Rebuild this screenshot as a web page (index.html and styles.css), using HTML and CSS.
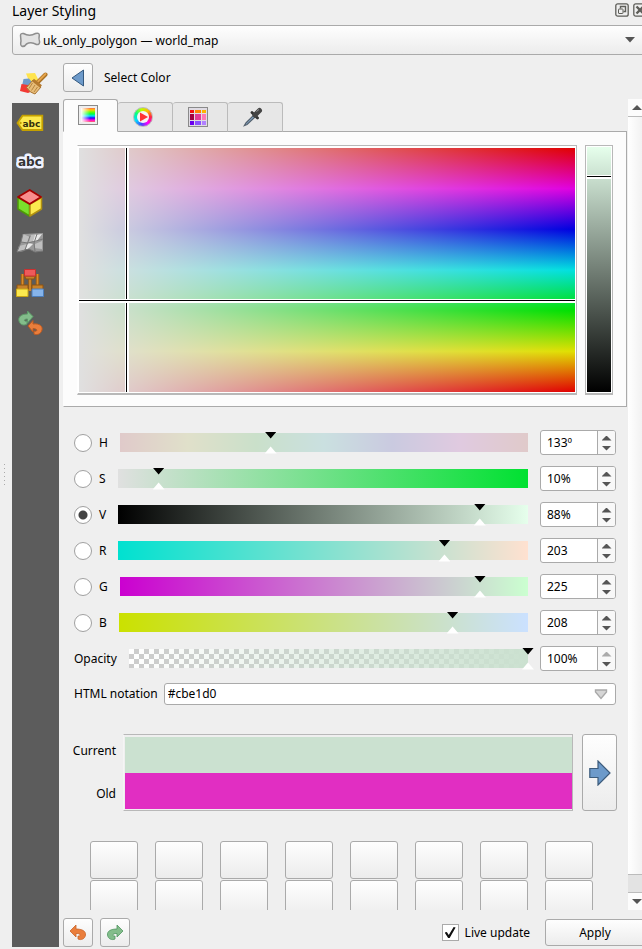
FILE: index.html
```html
<!DOCTYPE html>
<html lang="en">
<head>
<meta charset="utf-8">
<title>Layer Styling</title>
<link rel="stylesheet" href="styles.css">
</head>
<body>
<div class="dock">
  <div class="splitter"><i></i></div>
  <div class="panel">
    <header class="titlebar">
      <h1>Layer Styling</h1>
      <button class="dock-btn" aria-label="Float panel"><svg width="14" height="14" viewBox="0 0 14 14" fill="none" stroke="#5e5e59"><rect x=".8" y=".8" width="12.4" height="12.4" rx="2" stroke-width="1.3"/><path d="M5.5 5.5V3.5h5v5h-2" stroke-width="1.4"/><rect x="3.5" y="6" width="4.5" height="4.5" rx=".5"/></svg></button>
      <button class="dock-btn" aria-label="Close panel"><svg width="14" height="14" viewBox="0 0 14 14" fill="none" stroke="#5e5e59"><rect x=".8" y=".8" width="12.4" height="12.4" rx="2" stroke-width="1.3"/><path d="M3.5 3.5l7 7M10.500 3.500l-7 7" stroke-width="2.4"/></svg></button>
    </header>
    <div class="layer">
      <svg class="layer-icon" width="22" height="16" viewBox="0 0 22 16"><path d="M1.500 3.500Q1.500 1 4.500 1.500C9 4 13 3.500 16.500 1.500Q20 .5 20.300 3Q19.500 6.500 20.600 10Q20.500 13 17.500 12.500Q12 9.500 7.500 12Q5.500 15 3 14.200Q1 13.500 2 9Z" fill="#e3e3e3" stroke="#8e8e8e" stroke-width="1.500"/></svg>
      <select class="layer-select" aria-label="Layer"><option>uk_only_polygon — world_map</option></select>
      <svg class="layer-arrow" width="10" height="6" viewBox="0 0 10 6"><path d="M0 0h10L5 5.500z" fill="#555"/></svg>
    </div>
    <div class="body">
      <nav class="sidebar">
        <button class="side-item active" aria-label="Symbology"><svg width="28" height="28" viewBox="0 0 28 28">
          <path d="M6 4.500L15 4L19 12L9 12Z" fill="#ffe44d"/><path d="M3.500 10L9 9.500L15 17L2 17Z" fill="#6f9bcb"/><path d="M1.500 15L8 16L15 21L8 24L0 22Z" fill="#f23a34"/>
          <path d="M17.500 13.500L25.500 5.500" stroke="#a86f20" stroke-width="4" stroke-linecap="round"/><path d="M17 13.500L25.500 5" stroke="#e5a44c" stroke-width="2" stroke-linecap="round"/>
          <path d="M13 11L21 18L15 25Q10 24 6.500 18.500Z" fill="#e8bd79" stroke="#a87535"/><path d="M13 11L21 17.500" stroke="#b57a2f" stroke-width="3"/><path d="M12.500 14L9 19.500M15 16L11.500 21.500M17.500 18L14 23" stroke="#b6853f"/></svg></button>
        <button class="side-item" aria-label="Labels"><svg width="28" height="28" viewBox="0 0 28 28"><path d="M1.500 14L6.500 6.700H26.300V21H6.500Z" fill="#fce94f" stroke="#c4a000" stroke-width="1.800"/><circle cx="4.500" cy="14" r="1.200" fill="#c4a000"/><text class="tag-text" x="6.500" y="17.500">abc</text></svg></button>
        <button class="side-item" aria-label="Masks"><svg width="28" height="28" viewBox="0 0 28 28"><text class="halo-text" x="2" y="17">abc</text></svg></button>
        <button class="side-item" aria-label="3D view"><svg width="28" height="28" viewBox="0 0 28 28" stroke-linejoin="round"><path d="M2 8.500L13.500 15V27L2 20Z" fill="#7be02c" stroke="#4e9a06" stroke-width="1.500"/><path d="M25.500 8.500L14 15V27L25.500 20Z" fill="#fce94f" stroke="#b09010" stroke-width="1.500"/><path d="M13.700 1L25 8L13.700 15L2 8Z" fill="#f98d8d" stroke="#a40000" stroke-width="1.800"/></svg></button>
        <button class="side-item" aria-label="Diagrams"><svg width="28" height="28" viewBox="0 0 28 28"><path d="M7 5L27 4V22L19 23L13 20L1 23L5 13Z" fill="#999"/><path d="M7 5L14 8L12 14L5 13ZM15 6L21 5L19 12L13 13ZM3 17L11 15L8 22L1 23ZM19 15L26 12V20L18 19Z" fill="#bfbfbf"/><path d="M19 6L26 5L21 12L17 13ZM12 14L17 15L12 20L9 20Z" fill="#e8e8e8"/><path d="M7 5L5 13L1 23L13 20L19 23L27 22M5 13L12 14L20 12L27 10M14 7L9 21M21 5L18 14L19 22" fill="none" stroke="#777"/></svg></button>
        <button class="side-item" aria-label="Rendering"><svg width="28" height="30" viewBox="0 0 28 30"><path d="M6.500 18V6M21.500 18V6M14 10V23" fill="none" stroke="#9c5c12" stroke-width="3.500"/><path d="M6.500 18V6M21.500 18V6M14 10V23" fill="none" stroke="#d98d2d" stroke-width="1.600"/><path d="M1 17H12V22H1ZM16 17H27V22H16ZM8.500 8H19.500L18 11H10Z" fill="#c6822c" stroke="#8d5310"/><path d="M8.500 1.500H19.500V8H8.500Z" fill="#ee5a5a" stroke="#c93030"/><path d="M.5 21H12V28.500H.5Z" fill="#fce94f" stroke="#c9a514"/><path d="M16 21H27.500V28.500H16Z" fill="#86b4ea" stroke="#4c7ebc"/></svg></button>
        <button class="side-item" aria-label="History"><svg width="28" height="28" viewBox="0 0 28 28"><path d="M17 7.500L11.500 2V5C5 5 2 8 3 12C4 16 8 17 11 15V12C8 13 7 10 11.500 10V14Z" fill="#83bd8b" stroke="#5d9b68"/><path d="M12 17L17 11.500V15C24 14 27 18 26 21C25 25 21 26.500 18 25V22C21 23 23 20 17 19.500V23Z" fill="#ea7e3c" stroke="#bd5a20"/></svg></button>
      </nav>
      <main class="main">
        <div class="heading"><button class="btn square" aria-label="Back"><svg width="14" height="18" viewBox="0 0 14 18"><path d="M12.500 1V17L1 9Z" fill="#6d9aca" stroke="#34597f"/></svg></button><h2>Select Color</h2></div>
        <div class="scroll-area">
          <div class="content">
            <div class="tabs" role="tablist">
              <button class="tab selected" role="tab" aria-selected="true" aria-label="Color ramp"><span class="ramp-icon"></span></button>
              <button class="tab" role="tab" aria-label="Color wheel"><span class="wheel-icon"><svg width="20" height="20" viewBox="0 0 20 20"><circle cx="10" cy="10" r="6" fill="#f5f5f5"/><path d="M7 5.500L15 10L7 14.500Z" fill="#f33"/></svg></span></button>
              <button class="tab" role="tab" aria-label="Color swatches"><svg width="20" height="20" viewBox="0 0 20 20"><rect x=".5" y=".5" width="19" height="19" fill="#e0dce4" stroke="#8a8a8a"/><path d="M2 3h4v3H2z" fill="#f01010"/><path d="M7 3h6v3H7z" fill="#ff8200"/><path d="M14 3h4v3h-4z" fill="#ffb400"/><path d="M2 7h4v6H2z" fill="#a00040"/><path d="M7 7h6v6H7z" fill="#e23a93"/><path d="M14 7h4v6h-4z" fill="#ff78b4"/><path d="M2 14h4v4H2z" fill="#6a00ee"/><path d="M7 14h6v4H7z" fill="#8a50ff"/><path d="M14 14h4v4h-4z" fill="#b080ff"/></svg></button>
              <button class="tab" role="tab" aria-label="Color picker"><svg width="20" height="20" viewBox="0 0 20 20"><path d="M11 8L3 16L1.500 18.500L4 17.500L12.500 9.500" fill="#9cc7ee" stroke="#54616e" stroke-width="1.300"/><path d="M9 5.500L14.500 11" stroke="#333" stroke-width="2.800" stroke-linecap="round"/><path d="M12 8L16.500 3.500" stroke="#444" stroke-width="5" stroke-linecap="round"/><path d="M13.500 4.500L16 2.500" stroke="#999"/></svg></button>
            </div>
            <section class="picker">
              <div class="frame field-frame"><div class="field"><i class="cross-x"></i><i class="cross-y"></i></div></div>
              <div class="frame value-frame"><div class="value-ramp"><i class="value-mark"></i></div></div>
            </section>
            <section class="channels">
              <div class="channel"><input class="radio" type="radio" name="ch" id="ch-h"><label for="ch-h">H</label><input class="slider hue" type="range" aria-label="Hue" max="360" value="133"><span class="spin"><input aria-label="Hue value" value="133º"><button class="up" aria-label="Increase"></button><button class="down" aria-label="Decrease"></button></span></div>
              <div class="channel"><input class="radio" type="radio" name="ch" id="ch-s"><label for="ch-s">S</label><input class="slider sat" type="range" aria-label="Saturation" value="10"><span class="spin"><input aria-label="Saturation value" value="10%"><button class="up" aria-label="Increase"></button><button class="down" aria-label="Decrease"></button></span></div>
              <div class="channel"><input class="radio" type="radio" name="ch" id="ch-v" checked><label for="ch-v">V</label><input class="slider val" type="range" aria-label="Value" max="255" value="225"><span class="spin"><input aria-label="Value value" value="88%"><button class="up" aria-label="Increase"></button><button class="down" aria-label="Decrease"></button></span></div>
              <div class="channel"><input class="radio" type="radio" name="ch" id="ch-r"><label for="ch-r">R</label><input class="slider red" type="range" aria-label="Red" max="255" value="203"><span class="spin"><input aria-label="Red value" value="203"><button class="up" aria-label="Increase"></button><button class="down" aria-label="Decrease"></button></span></div>
              <div class="channel"><input class="radio" type="radio" name="ch" id="ch-g"><label for="ch-g">G</label><input class="slider green" type="range" aria-label="Green" max="255" value="225"><span class="spin"><input aria-label="Green value" value="225"><button class="up" aria-label="Increase"></button><button class="down" aria-label="Decrease"></button></span></div>
              <div class="channel"><input class="radio" type="radio" name="ch" id="ch-b"><label for="ch-b">B</label><input class="slider blue" type="range" aria-label="Blue" max="255" value="208"><span class="spin"><input aria-label="Blue value" value="208"><button class="up" aria-label="Increase"></button><button class="down" aria-label="Decrease"></button></span></div>
              <div class="channel"><label for="opacity">Opacity</label><span class="checker"><input class="slider alpha" type="range" id="opacity" value="100"></span><span class="spin"><input aria-label="Opacity value" value="100%"><button class="up" aria-label="Increase" disabled></button><button class="down" aria-label="Decrease"></button></span></div>
              <div class="notation"><label for="html">HTML notation</label><span class="html-box"><input id="html" value="#cbe1d0"><button aria-label="Notation format"><svg width="14" height="11" viewBox="0 0 14 11"><path d="M1.500 1H12.500V3L7 9.500L1.500 3Z" fill="#d6d6d6" stroke="#a9a9a9" stroke-width="1.400"/></svg></button></span></div>
            </section>
            <section class="compare">
              <div class="compare-labels"><span>Current</span><span>Old</span></div>
              <div class="compare-swatches"><div class="current"></div><div class="old"></div></div>
              <button class="btn add" aria-label="Add to swatches"><svg width="22" height="26" viewBox="0 0 22 26"><path d="M.8 8.500H9V1L21 13L9 25V17.500H.8Z" fill="#6d9aca" stroke="#3d5c7c" stroke-width="1.200"/></svg></button>
            </section>
            <section class="swatches">
              <button class="btn"></button><button class="btn"></button><button class="btn"></button><button class="btn"></button><button class="btn"></button><button class="btn"></button><button class="btn"></button><button class="btn"></button>
              <button class="btn"></button><button class="btn"></button><button class="btn"></button><button class="btn"></button><button class="btn"></button><button class="btn"></button><button class="btn"></button><button class="btn"></button>
            </section>
          </div>
          <div class="scrollbar"><button class="scroll-up" aria-label="Scroll up"></button><div class="handle"></div><div class="track"></div><button class="scroll-down" aria-label="Scroll down"></button></div>
        </div>
        <footer class="footer">
          <button class="btn square" aria-label="Undo"><svg width="18" height="18" viewBox="0 0 18 18"><path d="M1 7L7 1V5C13 5 17 7 16.500 11C16 15 12 16.500 9 15V12C12 12.500 12 9 7 9.500V13Z" fill="#ea7e3c" stroke="#c9652a" stroke-width=".8"/></svg></button>
          <button class="btn square" aria-label="Redo"><svg width="18" height="18" viewBox="0 0 18 18"><path d="M17 7L11 1V5C5 5 1 7 1.500 11C2 15 6 16.500 9 15V12C6 12.500 6 9 11 9.500V13Z" fill="#83bd8b" stroke="#4f9560" stroke-width=".8"/></svg></button>
          <span class="live"><input type="checkbox" id="live" checked><label for="live">Live update</label></span>
          <button class="btn apply">Apply</button>
        </footer>
      </main>
    </div>
  </div>
</div>
</body>
</html>
```
FILE: styles.css
```css
* { box-sizing: border-box; }
body {
  margin: 0;
  overflow: hidden;
  background: #efefef;
  color: #000;
  font: 12px/16px "Noto Sans", "Open Sans", sans-serif;
}
button, input, select { font: inherit; color: inherit; margin: 0; padding: 0; }
button { border: 0; background: none; }
h1, h2 { margin: 0; font-weight: 400; }
svg { display: block; flex: none; }

/* The dock runs slightly past the right edge of the window. */
.dock { display: flex; height: 100vh; margin-right: -4px; }
.splitter { width: 12px; display: flex; align-items: center; padding-left: 4px; }
.splitter i { width: 1px; height: 21px; background: repeating-linear-gradient(#aaa 0 1px, transparent 1px 4px); }
.panel { flex: 1; min-width: 0; display: flex; flex-direction: column; }

.titlebar { display: flex; height: 25px; gap: 4px; margin-right: -1px; align-items: flex-start; padding-top: 3px; }
.titlebar h1 { flex: 1; font-size: 14px; line-height: 16px; }

.layer {
  display: flex;
  align-items: center;
  height: 30px;
  padding: 0 10px 0 6px;
  border: 1px solid #aaa;
  border-radius: 3px;
  background: linear-gradient(#fefefe, #ececec);
}
.layer-select { flex: 1; min-width: 0; border: 0; background: none; appearance: none; padding: 2px 0 0 2px; outline: 0; }

.body { flex: 1; min-height: 0; display: flex; gap: 4px; padding-top: 8px; }
.sidebar {
  width: 47px;
  margin-bottom: 2px;
  display: flex;
  flex-direction: column;
  background: #5c5c5c;
}
.side-item { height: 40px; flex: none; display: flex; align-items: center; padding-left: 4px; }
.side-item.active { background: #efefef; padding-left: 8px; }
.tag-text { font: 700 9px "DejaVu Sans", sans-serif; fill: #33300c; }
.halo-text { font: 700 12px "DejaVu Sans", sans-serif; fill: #333; stroke: #eef2ff; stroke-width: 5px; stroke-linejoin: round; paint-order: stroke; }

.main { flex: 1; min-width: 0; display: flex; flex-direction: column; }
.btn {
  border: 1px solid #aaa;
  border-radius: 3px;
  background: linear-gradient(#fefefe, #ececec);
  display: flex;
  align-items: center;
  justify-content: center;
}
.square { width: 30px; height: 29px; }
.heading { display: flex; align-items: flex-start; gap: 11px; height: 36px; }
.heading h2 { font-size: 12px; line-height: 30px; }

.scroll-area { flex: 1; min-height: 0; display: flex; gap: 1px; overflow: hidden; }
.content { flex: 1; min-width: 0; }
.tabs { display: flex; align-items: flex-end; height: 33px; position: relative; margin-bottom: -1px; }
.tab {
  width: 55px;
  height: 30px;
  display: flex;
  align-items: center;
  justify-content: center;
  padding-right: 5px;
  border: 1px solid #bbb;
  border-left-width: 0;
  border-bottom-color: #aaa;
  border-radius: 3px 3px 0 0;
  background: #e7e7e7;
}
.tab.selected { height: 33px; padding: 0 5px 1px 0; border-left-width: 1px; border-color: #aaa; border-bottom-color: #fcfcfc; background: #fcfcfc; }
.ramp-icon {
  width: 20px;
  height: 20px;
  border: 1px solid #8a8a8a;
  background:
    linear-gradient(90deg, #fff, #fff0 65%) content-box,
    linear-gradient(#f64, #fc0, #6f0, #0f4, #0df, #20f, #f0d, #f66) content-box,
    #eee;
  padding: 2px;
}
.wheel-icon { width: 20px; height: 20px; border-radius: 50%; border: 1px solid #bbb; background: conic-gradient(from 90deg, #f24, #f0f, #44f, #0df, #0f8, #bf0, #fb0, #f24); }
.wheel-icon svg { margin: -1px; }

.picker { display: flex; gap: 8px; height: 276px; padding: 13px; border: 1px solid #aaa; border-left-color: #fcfcfc; background: #fcfcfc; }
.frame { border: 1px solid #b8b8b8; background: #fff; padding: 1px; height: 250px; }
.field-frame { flex: 1; border-left-color: #fff; border-bottom-width: 2px; padding-top: 2px; }
.value-frame { width: 28px; border-bottom-width: 2px; }
.field, .value-ramp { position: relative; height: 100%; }
.field {
  background:
    linear-gradient(90deg, #e0e0e0, #e0e0e000),
    linear-gradient(#e00000, #e000e0, #0000e0, #00e0e0, #00e000, #e0e000, #e00000);
}
.value-ramp { background: linear-gradient(#e6ffec, #000); }
.cross-x, .cross-y, .value-mark { position: absolute; background: #000; }
.cross-x { left: 9.500%; top: 0; bottom: 0; width: 1px; box-shadow: -1px 0 #fff, 2px 0 #fff, 1px 0 #fff; }
.cross-y { top: 62.300%; left: 0; right: 0; height: 1px; box-shadow: 0 -1px #fff, 0 2px #fff, 0 1px #fff; }
.value-mark { top: 12%; left: 0; right: 0; height: 1px; box-shadow: 0 -1px #fff, 0 2px #fff, 0 1px #fff; }

.channels { display: flex; flex-direction: column; gap: 11px; padding: 23px 11px 0 11px; }
.channel { display: flex; align-items: center; height: 25px; }
.radio {
  appearance: none;
  width: 18px;
  height: 18px;
  margin-right: 7px;
  border: 1px solid #a0a0a0;
  border-radius: 50%;
  background: #fff;
}
.radio:checked { background: radial-gradient(circle, #444 0 4px, #fff 5px); }
.slider {
  appearance: none;
  flex: 1;
  min-width: 0;
  height: 22px;
  margin-left: 6px;
  background: var(--ramp) center / calc(100% - 12px) 19px no-repeat;
}
.slider::-webkit-slider-thumb {
  appearance: none;
  width: 12px;
  height: 22px;
  background: linear-gradient(#000 50%, #fff 50%);
  clip-path: polygon(0 0, 100% 0, 50% 7px, 50% 15px, 100% 100%, 0 100%, 50% 15px, 50% 7px);
}
.hue { --ramp: linear-gradient(90deg, #e0caca, #e0e0ca, #cae0ca, #cae0e0, #cacae0, #e0cae0, #e0caca); }
.sat { --ramp: linear-gradient(90deg, #e0e0e0, #00e131); }
.val { --ramp: linear-gradient(90deg, #000, #e6ffec); }
.red { --ramp: linear-gradient(90deg, #00e1d0, #ffe1d0); }
.green { --ramp: linear-gradient(90deg, #cb00d0, #cbffd0); }
.blue { --ramp: linear-gradient(90deg, #cbe100, #cbe1ff); }
.alpha { --ramp: linear-gradient(90deg, #cbe1d000, #cbe1d0); }
.checker {
  flex: 1;
  display: flex;
  align-items: center;
  height: 19px;
  margin: 0 6px 0 12px;
  background: repeating-conic-gradient(#ccc 0 25%, #fff 0 50%) 0 0 / 10px 10px;
}
.checker .slider { margin: 0 -6px; }
.spin {
  width: 76px;
  height: 25px;
  margin-left: 6px;
  display: grid;
  grid-template: 1fr 1fr / 1fr 18px;
  border: 1px solid #aaa;
  border-radius: 3px;
  background: #fff;
  overflow: hidden;
}
.spin input { grid-row: 1 / 3; min-width: 0; width: 100%; border: 0; padding-left: 6px; background: none; }
.spin button { border-left: 1px solid #aaa; background: #f8f8f8; display: flex; justify-content: center; color: #555; }
.spin button:disabled { color: #aaa; }
.spin button::before { content: ""; width: 10px; height: 5px; background: currentColor; }
.spin .up { align-items: flex-end; padding-bottom: 2px; }
.spin .down { align-items: flex-start; padding-top: 3px; }
.up::before, .scroll-up::before { clip-path: polygon(50% 0, 100% 100%, 0 100%); }
.down::before, .scroll-down::before { clip-path: polygon(0 0, 100% 0, 50% 100%); }
.notation { display: flex; align-items: center; gap: 6px; height: 24px; }
.html-box { flex: 1; display: flex; align-items: center; height: 22px; border: 1px solid #aaa; border-radius: 3px; background: #fff; padding-right: 7px; }
.html-box input { flex: 1; min-width: 0; border: 0; padding-left: 3px; background: none; }

.compare { display: flex; padding: 28px 10px 0 11px; height: 105px; }
.compare-labels { width: 42px; margin-right: 7px; padding: 9px 0; display: flex; flex-direction: column; align-items: flex-end; justify-content: space-between; }
.compare-swatches { flex: 1; border: 1px solid #b8b8b8; border-left-color: #f5f5f5; padding: 2px 0 1px 1px; display: flex; flex-direction: column; }
.compare-swatches div { flex: 1; }
.current { background: #cbe1d0; }
.old { background: #e12ec2; }
.add { width: 35px; margin-left: 9px; }

.swatches { display: grid; grid-template-columns: repeat(8, 48px); justify-content: space-between; row-gap: 1px; padding: 30px 34px 0 27px; }
.swatches .btn { height: 38px; }

.scrollbar { width: 18px; display: flex; flex-direction: column; }
.scrollbar button { height: 17px; background: #fcfcfc; display: flex; align-items: center; justify-content: center; }
.scrollbar button::before { content: ""; width: 10px; height: 5px; background: #555; }
.handle { flex: 1; border: 1px solid #bbb; border-width: 1px 0; background: linear-gradient(90deg, #fff, #eee); }
.track { height: 18px; background: #e3e3e3; border-bottom: 1px solid #bbb; }

.footer { display: flex; align-items: center; height: 39px; padding: 6px 1px 0 0; gap: 7px; }
.live { margin-left: auto; display: flex; align-items: center; gap: 6px; }
.live input { appearance: none; width: 17px; height: 17px; border: 1px solid #aaa; background: #fff; display: grid; place-items: center; }
.live input:checked::before { content: ""; width: 11px; height: 11px; background: #111; clip-path: polygon(0 50%, 20% 45%, 38% 72%, 82% 0, 100% 4%, 46% 100%, 32% 100%); }
.apply { width: 100px; height: 27px; margin-left: 8px; }
```
